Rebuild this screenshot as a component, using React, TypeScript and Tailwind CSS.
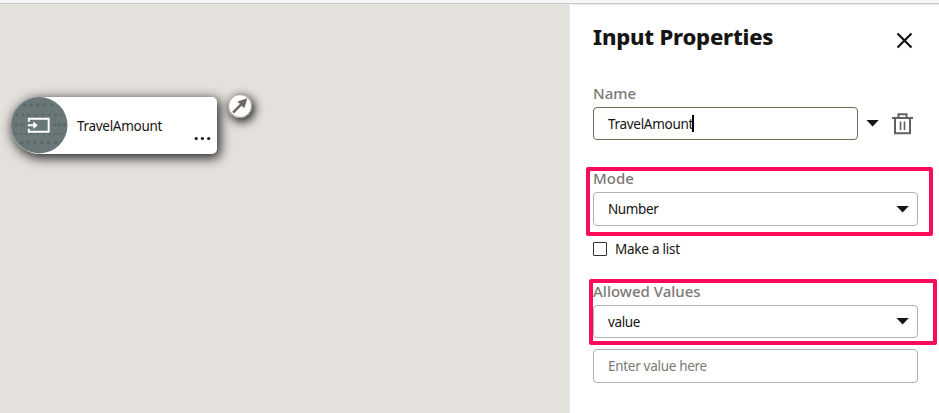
import type { ReactNode } from "react";

const dotRows = [
  { y: 8, xs: [14, 20, 27, 34, 41], r: 1.7 },
  { y: 18, xs: [6, 12, 18, 25, 32, 39, 45, 51], r: 1.4 },
  { y: 28, xs: [5, 11, 44, 49, 54], r: 1.7 },
  { y: 37, xs: [5, 10, 15, 21, 27, 33, 39, 44, 48, 52], r: 1.3 },
  { y: 46, xs: [11, 17, 24, 31, 38, 45], r: 1.8 },
];

function Caret() {
  return (
    <svg width="13" height="7" viewBox="0 0 13 7" className="block shrink-0">
      <path d="M0.5 0H12.8L6.6 6.5Z" fill="#161513" />
    </svg>
  );
}

function Label({ children }: { children: ReactNode }) {
  return <div className="h-6 whitespace-nowrap text-[15px] leading-[22px] font-medium text-[#7c7975]">{children}</div>;
}

function Select({ value, height }: { value: string; height: string }) {
  return (
    <div className={`flex w-[325px] items-center justify-between rounded-[4px] border border-[#b3b2b0] pr-2 pl-[14px] ${height}`}>
      <span className="text-[13.5px] leading-5 tracking-[-0.4px] text-[#161513]">{value}</span>
      <Caret />
    </div>
  );
}

function FlowNode() {
  return (
    <div className="flex h-[56.5px] w-[206px] rounded-l-[29px] rounded-r-[5px] bg-white shadow-[2px_3px_12px_1px_rgba(0,0,0,0.85)]">
      <svg width="56.5" height="56.5" viewBox="0 0 57 57" className="shrink-0">
        <circle cx="28.5" cy="28.5" r="28.5" fill="#697778" />
        {dotRows.map((row) =>
          row.xs.map((x) => <circle key={`${row.y}-${x}`} cx={x} cy={row.y} r={row.r} fill="#596869" />),
        )}
        <path d="M18 25V22H38V35H18V32" fill="none" stroke="#fff" strokeWidth="2" />
        <path d="M17 28.5H25" fill="none" stroke="#fff" strokeWidth="2" />
        <path d="M22.5 24.7L27 28.5L22.5 32.3Z" fill="#fff" />
      </svg>
      <span className="mt-[19px] ml-[9.5px] text-[13.5px] leading-5 tracking-[-0.3px] text-[#161513]">TravelAmount</span>
      <svg width="17" height="5" viewBox="0 0 17 5" className="mt-[39px] ml-auto mr-[6.5px] shrink-0" fill="#161513">
        <circle cx="2.2" cy="2.5" r="1.6" />
        <circle cx="8.4" cy="2.5" r="1.6" />
        <circle cx="14.7" cy="2.5" r="1.6" />
      </svg>
    </div>
  );
}

export default function App() {
  return (
    <div className="flex h-[413px] w-[939px] flex-col overflow-hidden bg-white font-['Noto_Sans',sans-serif]">
      <div className="h-1 shrink-0 border-b border-[#c8c8c8] bg-[#f5f5f5]" />
      <div className="flex min-h-0 flex-1">
        <main className="relative w-[569px] shrink-0 bg-[#e4e1dc]">
          <div className="absolute top-[93px] left-[11px]">
            <FlowNode />
          </div>
          <div className="absolute top-[90px] left-[228px] size-6 rounded-full bg-white shadow-[2px_3px_10px_1px_rgba(0,0,0,0.85)]">
            <svg width="24" height="24" viewBox="0 0 24 24">
              <circle cx="12" cy="12" r="11.5" fill="#fff" stroke="#8b8580" strokeWidth="0.9" />
              <path d="M5 18.7L14.5 9.2" stroke="#6f6762" strokeWidth="2.4" />
              <path d="M19.4 4.2L9.4 7.4L16.2 14.2Z" fill="#6f6762" />
            </svg>
          </div>
        </main>
        <aside className="relative flex w-[370px] flex-col border-t border-l border-[#ebebeb] bg-white pl-[23px]">
          <header className="flex h-[76px] pt-[15px]">
            <h1 className="w-[303px] whitespace-nowrap text-[22px] leading-8 font-extrabold tracking-[-0.2px] text-[#161513]">Input Properties</h1>
            <svg width="17" height="17" viewBox="0 0 17 17" className="mt-[12px]">
              <path d="M1.5 1.5L15.5 15.5M15.5 1.5L1.5 15.5" stroke="#161513" strokeWidth="2.2" />
            </svg>
          </header>

          <section className="pt-px">
            <Label>Name</Label>
            <div className="mt-px flex items-center">
              <div className="flex h-[33px] w-[265px] items-center rounded-[4px] border border-[#5f7350] pl-[14px]">
                <span className="text-[13.5px] leading-5 tracking-[-0.3px] text-[#161513]">TravelAmount</span>
                <span className="-ml-px h-[17px] w-[2px] bg-black" />
              </div>
              <div className="ml-[8px]">
                <Caret />
              </div>
              <svg width="21" height="22" viewBox="0 0 21 22" className="ml-[13px]" fill="none" stroke="#625f5c">
                <path d="M0 5H21M6.5 5V1.2H14.5V5M3 5V20.2H18V5" strokeWidth="2" />
                <path d="M8.5 8.5V17M12.5 8.5V17" strokeWidth="1.6" />
              </svg>
            </div>
          </section>

          <section className="mt-[27px]">
            <Label>Mode</Label>
            <div className="mt-px">
              <Select value="Number" height="h-[34px]" />
            </div>
          </section>

          <label className="mt-[13px] flex h-5 items-center gap-[8px]">
            <span className="size-[14px] rounded-[1px] border border-[#34312e]" />
            <span className="text-[13.5px] leading-5 tracking-[-0.25px] text-[#161513]">Make a list</span>
          </label>

          <section className="mt-[21px]">
            <Label>Allowed Values</Label>
            <div className="mt-px">
              <Select value="value" height="h-[33px]" />
            </div>
            <div className="mt-[11px] flex h-[34px] w-[325px] items-center rounded-[4px] border border-[#b3b2b0] pt-px pl-[14px] text-[13.5px] tracking-[-0.3px] text-[#7c7975]">
              Enter value here
            </div>
          </section>

          <div className="absolute top-[162px] left-[16px] h-[69px] w-[347px] rounded-[2px] border-4 border-[#fc0b5b]" />
          <div className="absolute top-[274px] left-[19px] h-[66px] w-[348px] rounded-[2px] border-4 border-[#fc0b5b]" />
        </aside>
      </div>
    </div>
  );
}
